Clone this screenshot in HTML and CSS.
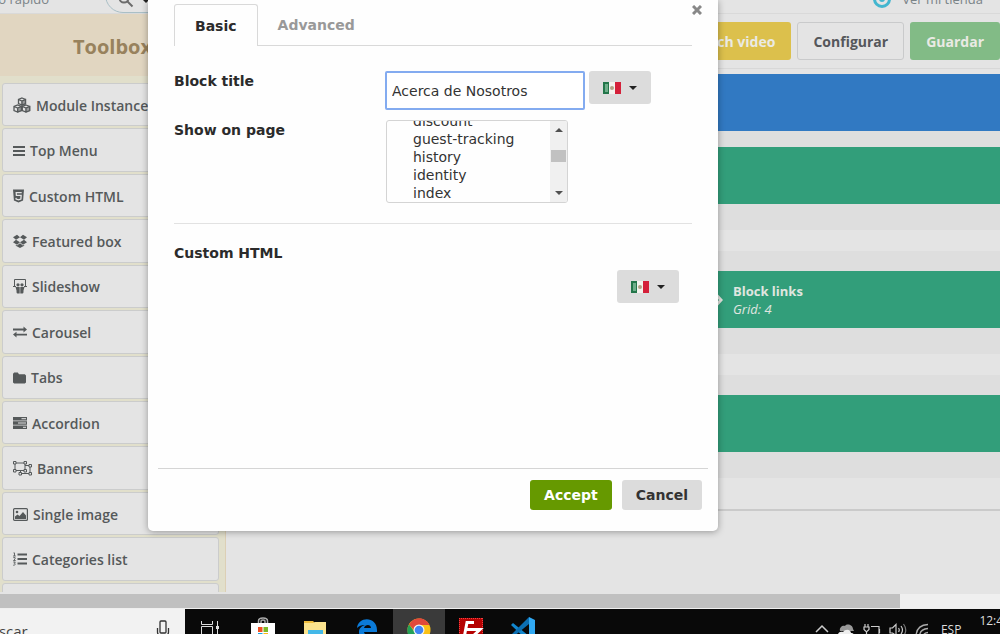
FILE: index.html
```html
<!DOCTYPE html>
<html lang="es">
<head>
    <meta charset="UTF-8">
    <meta name="viewport" content="width=device-width, initial-scale=1.0">
    <title>Toolbox</title>
    <link rel="stylesheet" href="styles.css">
</head>
<body>
    <div class="page">
        <header class="topbar">
            <a class="quick-link" href="#">Acceso rápido</a>
            <div class="search">
                <svg viewBox="0 0 16 16" width="16" height="16" fill="none" stroke="#6c6c6c" stroke-width="2"><circle cx="6" cy="5" r="4.500"/><path d="M9.500 8.500l5 5"/></svg>
                <span class="caret"></span>
            </div>
            <a class="shop-link" href="#">
                <svg viewBox="0 0 18 18" width="18" height="18" fill="none" stroke="#43b6cf" stroke-width="3"><circle cx="9" cy="9" r="7.500"/><circle cx="9" cy="9" r="1.500"/></svg>
                Ver mi tienda
            </a>
        </header>

        <div class="workspace">
            <aside class="toolbox">
                <h2>Toolbox</h2>
                <ul class="tools">
                    <li>
                        <svg viewBox="0 0 18 16" width="18" height="16" fill="none" stroke="#55595a" stroke-width="1.300"><path d="M9 1l3.500 1.500v4L9 8 5.500 6.500v-4zM5.500 2.500L9 4l3.500-1.500M9 4v4M4.700 8l3.700 1.500v4L4.700 15 1 13.500v-4zM1 9.500L4.700 11l3.700-1.500M4.700 11v4M13 8l3.700 1.500v4L13 15l-3.700-1.500v-4zM9.300 9.500L13 11l3.700-1.500M13 11v4"/><path fill="#55595a" d="M9 4l3.500-1.500v4L9 8zM4.700 11l3.700-1.500v4L4.700 15zM13 11l3.700-1.500v4L13 15z" opacity=".5"/></svg>
                        Module Instance
                    </li>
                    <li>
                        <svg viewBox="0 0 12 14" width="12" height="14" fill="#55595a"><path d="M0 2h12v2H0zM0 6h12v2H0zM0 10h12v2H0z"/></svg>
                        Top Menu
                    </li>
                    <li>
                        <svg viewBox="0 0 12 14" width="11" height="14"><path fill="#55595a" d="M0 0h12l-1 12-5 2-5-2z"/><path fill="none" stroke="#e4e4e4" stroke-width="1.400" d="M9.500 3.300h-6l.2 3h5.200l-.3 4-2.600.9-2.600-.9-.1-1.300"/></svg>
                        Custom HTML
                    </li>
                    <li>
                        <svg viewBox="0 0 14 14" width="14" height="14" fill="#55595a"><path d="M4 .800L7 3.300 3 5.800 0 3.300zM10 .800l4 2.500-3 2.500-4-2.500zM3 5.800l4 2.500-3 2.400L0 8.200zM11 5.800l3 2.400-4 2.500-3-2.400zM7 9.200l3 2.300 1.200-.7v1L7 14l-4.200-2.200v-1l1.200.7z"/></svg>
                        Featured box
                    </li>
                    <li>
                        <svg viewBox="0 0 14 15" width="14" height="15" fill="#55595a"><path fill="none" stroke="#55595a" d="M1.500 7V.500h11V7M0 7.500h3M11 7.500h3"/><circle cx="5" cy="5.800" r="1.600"/><circle cx="9" cy="5.800" r="1.600"/><path d="M2.500 8h4.200v6.500H4.500c-1 0-1-1-1-3zM7.300 8h4.200l-1 3.500c0 2 0 3-1 3H7.300z"/></svg>
                        Slideshow
                    </li>
                    <li>
                        <svg viewBox="0 0 14 12" width="14" height="12" fill="#55595a"><path d="M0 2.500h10.500V.500L14 3.400l-3.500 3v-2H0zM14 7.700H3.500v-2L0 8.600l3.500 3v-2H14z"/></svg>
                        Carousel
                    </li>
                    <li>
                        <svg viewBox="0 0 13 12" width="13" height="12" fill="#55595a"><path d="M1.200.500h3.600L6 2.200h5.800L13 3.400v7l-1.200 1.100H1.200L0 10.400v-8.700z"/></svg>
                        Tabs
                    </li>
                    <li>
                        <svg viewBox="0 0 14 12" width="14" height="12" fill="#55595a"><path d="M0 0h14v3.500H0zM0 4.300h14v3.400H0zM0 8.500h14V12H0z"/><path stroke="#e4e4e4" stroke-width="1" d="M8.500 1.700H13M5 6h8M10 10.300h3"/></svg>
                        Accordion
                    </li>
                    <li>
                        <svg viewBox="0 0 19 15" width="19" height="15" fill="none" stroke="#55595a"><path d="M2 2h10v7.500H2zM12 4.500h5v8H7.500v-3"/><path fill="#e4e4e4" d="M.500.500H3V3H.500zM11 .500h2.500V3H11zM.500 8.500H3V11H.500zM11 8.500h2.500V11H11zM16 3.500h2.500V6H16zM16 11.500h2.500V14H16zM6 11.500h2.500V14H6z"/></svg>
                        Banners
                    </li>
                    <li>
                        <svg viewBox="0 0 15 13" width="15" height="13" fill="#55595a"><rect x=".6" y=".6" width="13.800" height="11.800" rx="1" fill="none" stroke="#55595a" stroke-width="1.200"/><circle cx="4" cy="4" r="1.300"/><path d="M2 11V8.500l2.500-2 2 1.500L10 4l3 3.500V11z"/></svg>
                        Single image
                    </li>
                    <li>
                        <svg viewBox="0 0 14 14" width="14" height="14" fill="#55595a"><path d="M4.500 1.500H14v2H4.500zM4.500 6H14v2H4.500zM4.500 10.500H14v2H4.500z"/><path fill="none" stroke="#55595a" stroke-width=".9" d="M.500.900h1V4M0 4h2.800M.300 5.600h1.800v1.300L.500 8.500h2.200M.300 10h2l-1 1.300c1.500 0 1.300 2.200-1.100 1.900"/></svg>
                        Categories list
                    </li>
                    <li></li>
                </ul>
            </aside>

            <main class="builder">
                <div class="actions">
                    <button class="action watch" type="button">Watch video</button>
                    <button class="action config" type="button">Configurar</button>
                    <button class="action save" type="button">Guardar</button>
                </div>
                <div class="canvas">
                    <div class="block blue"></div>
                    <div class="row"><div class="block"></div></div>
                    <div class="row">
                        <div class="block links">
                            <svg viewBox="0 0 14 14" width="14" height="14" fill="none" stroke="#e4e4e0" stroke-width="3"><path d="M7 1.500l5 5.500-5 5.500"/></svg>
                            <div>
                                <strong>Block links</strong>
                                <em>Grid: 4</em>
                            </div>
                        </div>
                    </div>
                    <div class="row"><div class="block"></div></div>
                </div>
            </main>
        </div>
    </div>

    <div class="hscroll"><div class="hscroll-thumb"></div></div>

    <footer class="taskbar">
        <label class="task-search">
            <input type="text" value="Buscar" aria-label="Buscar">
            <svg viewBox="0 0 14 20" width="14" height="20" fill="none" stroke="#333" stroke-width="1.300"><rect x="4" y="1" width="6" height="12" rx="1"/><path d="M1.500 8v4c0 2 1 4 5.500 4s5.500-2 5.500-4V8M7 16v4"/></svg>
        </label>
        <div class="apps">
            <span class="app">
                <svg viewBox="0 0 24 24" width="24" height="24" fill="none" stroke="#ddd"><path d="M2.500 4v3.500h11V4M2.500 9.500h11v8h-11zM2.500 23v-3h11v3M18.500 4v20"/><path stroke-width="3" d="M18.500 9v3"/></svg>
            </span>
            <span class="app">
                <svg viewBox="0 0 26 24" width="26" height="24"><path fill="none" stroke="#aaa" stroke-width="1.500" d="M8.500 8V4c0-4 9-4 9 0v4M11 8V4.500c0-2 4-2 4 0V8"/><path fill="#fff" d="M1 6h24v18H1z"/><path fill="#f05023" d="M8 10h4.500v5H8z"/><path fill="#7db928" d="M13.500 10H18v5h-4.500z"/><path fill="#17a3e5" d="M8 16h4.500v5H8z"/><path fill="#fdb813" d="M13.500 16H18v5h-4.500z"/></svg>
            </span>
            <span class="app">
                <svg viewBox="0 0 24 24" width="24" height="24"><path fill="#efbd3d" d="M1 4h9l2 2H1z"/><path fill="#fbe38e" d="M1 6h9l2-1h11v19H1z"/><path fill="#43b8e8" d="M5 13h15v11H5z"/><path fill="#7ad2f4" d="M8 17h9v7H8z"/></svg>
            </span>
            <span class="app">
                <svg viewBox="0 0 24 24" width="24" height="24"><path fill="#0b7bd9" d="M2 11C3-1 22-1 22 13v2H9c1 5 8 5 12 3v4C14 26 4 24 4 15c0-4 3-6 6-7-4 0-6 1-8 3zm7 0h7c0-4-6-4-7 0z"/></svg>
            </span>
            <span class="app active">
                <svg viewBox="0 0 24 24" width="24" height="24"><circle cx="12" cy="13" r="11.500" fill="#fbc116"/><path fill="#e1493b" d="M2 7.500C7-1 18-1 22.500 8H12c-3 0-5 2-5 5z"/><path fill="#23a057" d="M2 7.500l6 8c2 3 4 3 6 2.500L10.500 24C1 23-2 14 2 7.500z"/><circle cx="12" cy="13" r="5.500" fill="#f4f4f4"/><circle cx="12" cy="13" r="4.300" fill="#4285f4"/></svg>
            </span>
            <span class="app">
                <svg viewBox="0 0 26 24" width="26" height="24"><path fill="#b50202" d="M1 1h24v23H1z"/><path fill="none" stroke="#e44" stroke-dasharray="1 1" d="M1 1.500h24M1.500 1v23M24.500 1v23"/><path fill="none" stroke="#fff" stroke-width="3" d="M16 5.500H9L6 21M8 12.500h6M14 12.500h8L12 22h8"/></svg>
            </span>
            <span class="app">
                <svg viewBox="0 0 26 24" width="26" height="24"><path fill="#1287cf" d="M1 8l2-2 16 13v5h-1z"/><path fill="#0b6fb3" d="M1 18L19 0v7L3 20z"/><path fill="#31a9f3" d="M19 0l6 3v21h-6z"/></svg>
            </span>
        </div>
        <div class="tray">
            <svg viewBox="0 0 14 14" width="14" height="14" fill="none" stroke="#ccc" stroke-width="1.500"><path d="M1 9l6-6 6 6"/></svg>
            <svg viewBox="0 0 18 14" width="18" height="14"><path fill="#999" d="M3 8c-1-4 3-6 5-5 2-3 8-1 8 3l1 2z"/><path fill="#eee" d="M1 14c-1-4 2-6 5-5 3-4 8-2 8 1 3 0 3 2 3 4z"/></svg>
            <svg viewBox="0 0 18 14" width="18" height="14" fill="none" stroke="#ccc" stroke-width="1.200"><path d="M8 3.500h8v9H6M16.500 6v4M2 1v3M5 1v3M1 4h5v2.500l-2 2h-1l-2-2zM3.500 9v5"/></svg>
            <svg viewBox="0 0 18 14" width="18" height="14" fill="none" stroke="#ccc" stroke-width="1.200"><path d="M1 5h2.500L7 1.500v11L3.500 10H1zM9.500 5q1.500 2 0 4M12 3q3 4 0 8"/><path stroke="#777" d="M14.500 1q4.500 6 0 12"/></svg>
            <svg viewBox="0 0 14 14" width="14" height="14" fill="none" stroke="#aaa" stroke-width="1.300"><path d="M1 14Q1 2 13 1.500M4.500 14q0-8 8.500-8.500M8 14q0-4 5-4.500"/></svg>
            <span class="lang">ESP</span>
            <span class="clock">12:45</span>
        </div>
    </footer>

    <div class="modal" role="dialog">
        <button class="close" type="button" aria-label="Close">
            <svg viewBox="0 0 10 10" width="10" height="10" stroke="#888" stroke-width="3"><path d="M1 1l8 8M9 1L1 9"/></svg>
        </button>
        <form class="modal-body">
            <nav class="tabs">
                <a class="tab current" href="#basic">Basic</a>
                <a class="tab" href="#advanced">Advanced</a>
            </nav>
            <div class="field">
                <label for="blockTitle">Block title</label>
                <div class="control">
                    <input id="blockTitle" type="text" value="Acerca de Nosotros">
                    <button class="lang-btn" type="button" aria-label="Language">
                        <svg viewBox="0 0 18 12" width="18" height="12"><path fill="#f3f3ee" d="M0 0h18v12H0z"/><path fill="#23764a" d="M0 0h6v12H0z"/><path fill="#6fae8a" d="M2 2h3v8H2z"/><path fill="#d4213a" d="M12 0h6v12h-6z"/><circle cx="9" cy="6" r="2" fill="#b3a184"/></svg>
                        <span class="caret"></span>
                    </button>
                </div>
            </div>
            <div class="field">
                <label for="showOn">Show on page</label>
                <div class="listbox">
                    <select id="showOn" multiple size="5">
                        <option>discount</option>
                        <option>guest-tracking</option>
                        <option>history</option>
                        <option>identity</option>
                        <option>index</option>
                    </select>
                    <div class="vscroll">
                        <span class="arrow up"></span>
                        <span class="thumb"></span>
                        <span class="arrow down"></span>
                    </div>
                </div>
            </div>
            <div class="html-section">
                <h4>Custom HTML</h4>
                <button class="lang-btn" type="button" aria-label="Language">
                    <svg viewBox="0 0 18 12" width="18" height="12"><path fill="#f3f3ee" d="M0 0h18v12H0z"/><path fill="#23764a" d="M0 0h6v12H0z"/><path fill="#6fae8a" d="M2 2h3v8H2z"/><path fill="#d4213a" d="M12 0h6v12h-6z"/><circle cx="9" cy="6" r="2" fill="#b3a184"/></svg>
                    <span class="caret"></span>
                </button>
            </div>
        </form>
        <div class="modal-footer">
            <button class="btn accept" type="button">Accept</button>
            <button class="btn" type="button">Cancel</button>
        </div>
    </div>
</body>
</html>
```

FILE: styles.css
```css
* {
    box-sizing: border-box;
    margin: 0;
    padding: 0;
}

body {
    display: flex;
    flex-direction: column;
    height: 100vh;
    overflow: hidden;
    background: #e4e4e4;
    font-family: "Open Sans", "Liberation Sans", sans-serif;
    font-size: 14px;
    color: #55595a;
}

a {
    color: inherit;
    text-decoration: none;
}

button {
    cursor: pointer;
}

/* Page behind the dialog */
.page {
    flex: 1;
    min-height: 0;
    display: flex;
    flex-direction: column;
    padding-bottom: 2px;
}

.topbar {
    display: flex;
    align-items: flex-end;
    height: 14px;
    flex-shrink: 0;
    border-bottom: 1px solid #d9d9d9;
}

.topbar a {
    font-size: 13px;
    line-height: 20px;
    padding-bottom: 4px;
    color: #7a8387;
}

.quick-link {
    width: 105px;
    direction: rtl;
    white-space: nowrap;
    padding-right: 56px;
}

.search {
    display: flex;
    align-items: center;
    gap: 8px;
    width: 240px;
    height: 36px;
    padding: 12px 12px 0;
    border: 1px solid #a9bfc6;
    border-radius: 18px;
}

.shop-link {
    display: flex;
    align-items: center;
    gap: 11px;
    margin-left: auto;
    margin-right: 17px;
}

.workspace {
    flex: 1;
    min-height: 0;
    display: flex;
}

.toolbox {
    display: flex;
    flex-direction: column;
    width: 226px;
    overflow: hidden;
    background: #e1dfcb;
    border-right: 1px solid #dccfb5;
}

.toolbox h2 {
    height: 62px;
    flex-shrink: 0;
    line-height: 66px;
    text-align: center;
    font-size: 20px;
    color: #98825d;
    background: #e1d6c1;
}

.tools {
    flex: 1;
    display: flex;
    flex-direction: column;
    gap: 2px;
    margin: 7px 6px -34px 2px;
    list-style: none;
}

.tools li {
    flex: 1;
    display: flex;
    align-items: center;
    gap: 5px;
    padding: 1px 0 0 10px;
    font-weight: 600;
    white-space: nowrap;
    background: #e4e4e4;
    border: 1px solid #cbcccc;
    border-radius: 3px;
}

.builder {
    flex: 1;
    min-width: 0;
}

.actions {
    display: flex;
    justify-content: flex-end;
    gap: 6px;
    height: 55px;
    padding: 8px 0;
    border-bottom: 1px solid #d8d8d8;
}

.action {
    height: 38px;
    padding: 0 15px;
    border: 1px solid transparent;
    border-radius: 3px;
    font: bold 14px "Open Sans", sans-serif;
    color: #eaeae4;
}

.watch {
    background: #dcc04c;
}

.config {
    background: #e4e4e4;
    border: 1px solid #c9cacb;
    color: #55575b;
}

.save {
    background: #82bb86;
}

.canvas {
    margin: 5px 0 0 20px;
    border-bottom: 2px solid #cacaca;
    padding-bottom: 31px;
}

.row {
    margin-bottom: 21px;
    padding: 20px 0 26px;
    background: #dedede;
}

.row:last-child {
    margin-bottom: 0;
}

.block {
    height: 57px;
    background: #329e7a;
}

.block.blue {
    background: #3179c2;
}

.block.blue + .row {
    padding-top: 16px;
}

.links {
    display: flex;
    align-items: center;
    gap: 10px;
    padding-left: 463px;
    font-size: 13px;
    line-height: 18px;
    color: #e0e6e0;
}

.links strong,
.links em {
    display: block;
}

/* Window scrollbar and taskbar */
.hscroll {
    height: 15px;
    background: #efefef;
}

.hscroll-thumb {
    width: 90%;
    height: 14px;
    background: #c0c0c0;
}

.taskbar {
    display: flex;
    height: 25px;
    overflow: hidden;
    background: #090909;
    color: #ddd;
}

.task-search {
    display: flex;
    align-items: flex-start;
    width: 185px;
    height: 40px;
    padding: 11px 15px 0 0;
    background: #f2f2f2;
}

.task-search input {
    flex: 1;
    min-width: 0;
    height: 22px;
    border: 0;
    background: none;
    text-indent: -20px;
    font: 15px "Open Sans", sans-serif;
    color: #444;
}

.apps {
    display: flex;
}

.app {
    display: flex;
    justify-content: center;
    width: 52px;
    height: 40px;
    padding-top: 8px;
}

.app.active {
    background: #3a3a3a;
}

.tray {
    display: flex;
    gap: 8px;
    margin-left: auto;
    margin-right: -10px;
}

.tray svg {
    margin-top: 14px;
}

.lang {
    margin: 13px 10px 0 4px;
    font-size: 12px;
    line-height: 16px;
}

.clock {
    font-size: 12px;
    line-height: 24px;
}

/* Dialog */
.modal {
    position: absolute;
    top: 0;
    left: 148px;
    right: 282px;
    min-height: 531px;
    display: flex;
    flex-direction: column;
    background: #fefefe;
    border-radius: 0 0 5px 5px;
    box-shadow: 0 1px 7px rgba(0, 0, 0, 0.35);
    font-family: "DejaVu Sans", Verdana, sans-serif;
    color: #2b2b2b;
}

.close {
    position: absolute;
    top: 5px;
    right: 16px;
    width: 10px;
    height: 10px;
    border: 0;
    background: none;
}

.close svg {
    display: block;
}

.modal-body {
    flex: 1;
    padding: 4px 26px 0;
}

.tabs {
    display: flex;
    height: 42px;
    margin-bottom: 25px;
    border-bottom: 1px solid #d9d9d9;
    font-weight: 700;
}

.tab {
    padding: 0 20px;
    line-height: 42px;
    color: #999;
}

.tab.current {
    height: 42px;
    border: 1px solid #d9d9d9;
    border-bottom: 0;
    border-radius: 3px 3px 0 0;
    background: #fefefe;
    color: #2b2b2b;
}

.field {
    display: flex;
    margin-bottom: 10px;
}

.field label {
    width: 211px;
    line-height: 21px;
    font-weight: 700;
}

.control {
    display: flex;
    gap: 4px;
}

.control input {
    width: 200px;
    height: 39px;
    padding: 0 5px;
    border: 2px solid #83abf0;
    border-radius: 2px;
    outline: none;
    font: 14px "DejaVu Sans", sans-serif;
    color: #333;
}

.lang-btn {
    display: flex;
    align-items: center;
    justify-content: center;
    gap: 8px;
    width: 62px;
    height: 33px;
    border: 0;
    border-radius: 3px;
    background: #dcdcdc;
}

.caret {
    border: 4px solid transparent;
    border-top-color: #222;
    border-bottom: 0;
}

.listbox {
    display: flex;
    width: 182px;
    height: 83px;
    border: 1px solid #d4d4d4;
    border-radius: 3px;
    overflow: hidden;
    margin-left: 1px;
}

/* taller than its frame, so the list shows scrolled */
.listbox select {
    flex: 1;
    align-self: flex-end;
    height: 90px;
    margin-bottom: -1px;
    border: 0;
    outline: none;
    overflow: hidden;
    background: none;
    font: 14px "DejaVu Sans", sans-serif;
    color: #333;
}

.listbox option {
    height: 18px;
    min-height: 0;
    padding: 0 0 0 26px;
    line-height: 18px;
}

.vscroll {
    display: flex;
    flex-direction: column;
    align-items: center;
    width: 17px;
    padding: 7px 0;
    background: #f0f0f0;
}

.arrow {
    border: 4px solid transparent;
}

.arrow.up {
    border-top: 0;
    border-bottom-color: #505050;
}

.arrow.down {
    margin-top: auto;
    border-bottom: 0;
    border-top-color: #505050;
}

.thumb {
    width: 15px;
    height: 12px;
    margin-top: 18px;
    background: #c1c1c1;
}

.html-section {
    display: flex;
    flex-direction: column;
    margin: 20px 0;
    padding-top: 19px;
    border-top: 1px solid #e2e2e2;
}

.html-section h4 {
    font-size: 14px;
    line-height: 21px;
}

.html-section .lang-btn {
    align-self: flex-end;
    margin: 6px 13px 0 0;
}

.modal-footer {
    display: flex;
    justify-content: flex-end;
    gap: 10px;
    margin: 0 10px;
    padding: 11px 6px 21px;
    border-top: 1px solid #d5d5d5;
}

.btn {
    height: 30px;
    padding: 0 14px;
    border: 0;
    border-radius: 3px;
    background: #dcdcdc;
    font: bold 14px "DejaVu Sans", sans-serif;
    color: #333;
}

.accept {
    background: #669900;
    color: #fff;
}
```
